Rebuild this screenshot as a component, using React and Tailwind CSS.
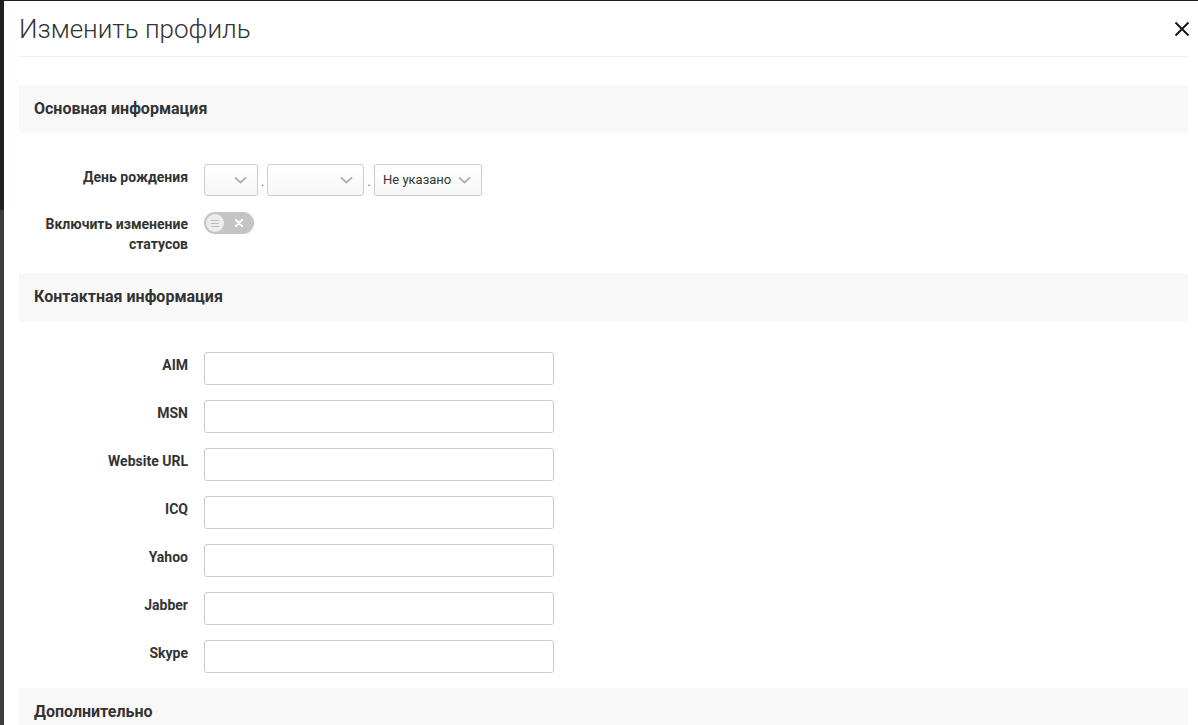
import React from "react";

const Chevron = () => (
  <svg width="13" height="8" viewBox="0 0 13 8" className="shrink-0">
    <path d="M1 1.5 L6.5 6.5 L12 1.5" fill="none" stroke="#b0b0b0" strokeWidth="1.7" />
  </svg>
);

const Select = ({ w, children }) => (
  <div
    className={`h-[32px] ${w} flex items-center justify-between pl-[8px] pr-[10px] border border-[#cccccc] rounded-[3px] bg-gradient-to-b from-white to-[#f7f7f7] text-[13px] text-[#333]`}
  >
    <span>{children}</span>
    <Chevron />
  </div>
);

const Label = ({ children }) => (
  <div className="w-[169px] shrink-0 text-right pt-[3px] pr-0 text-[14px] leading-[20px] font-bold text-[#333]">
    {children}
  </div>
);

const SectionHeader = ({ children }) => (
  <div className="h-[48px] bg-[#f8f8f8] flex items-center pl-[15px] text-[16px] font-bold text-[#333]">
    {children}
  </div>
);

const InputRow = ({ label }) => (
  <div className="flex gap-[16px] mb-[16px]">
    <Label>{label}</Label>
    <div className="w-[350px] h-[33px] border border-[#cccccc] rounded-[3px] bg-white"></div>
  </div>
);

export default function App() {
  return (
    <div
      className="w-[1198px] h-[725px] overflow-hidden flex bg-[#1d2126]"
      style={{ fontFamily: "Roboto, 'Liberation Sans', sans-serif" }}
    >
      <div className="w-[4px] shrink-0 flex flex-col">
        <div className="h-[210px] bg-[#1d2126]"></div>
        <div className="flex-1 bg-[#3d3d3d]"></div>
      </div>
      <div className="flex-1 mt-[1px] bg-white pl-[15px] pr-[10px]">
        <div className="h-[56px] border-b border-[#eeeeee] flex items-center justify-between">
          <div className="text-[26px] font-light text-[#333] tracking-[0px] pt-[1px]">Изменить профиль</div>
          <svg width="16" height="16" viewBox="0 0 16 16" className="mr-[-2px] mb-[0px]">
            <path d="M1.5 1.5 L14.5 14.5 M14.5 1.5 L1.5 14.5" stroke="#111" strokeWidth="1.8" />
          </svg>
        </div>
        <div className="mt-[28px]">
          <SectionHeader>Основная информация</SectionHeader>
          <div className="mt-[31px]">
            <div className="flex gap-[16px] mb-[16px]">
              <Label>День рождения</Label>
              <div className="flex items-center">
                <Select w="w-[54px]"></Select>
                <span className="w-[9px] text-center text-[12px] text-[#555] pt-[4px]">.</span>
                <Select w="w-[97px]"></Select>
                <span className="w-[10px] text-center text-[12px] text-[#555] pt-[4px]">.</span>
                <Select w="w-[108px]">Не указано</Select>
              </div>
            </div>
            <div className="flex gap-[16px] mb-[19px]">
              <div className="w-[169px] shrink-0 text-right pt-[2px] text-[14px] leading-[20px] font-bold text-[#333]">
                Включить изменение
                <br />
                статусов
              </div>
              <div className="w-[50px] h-[22px] rounded-full bg-[#c4c4c4] flex items-center justify-between pl-[2px] pr-[11px]">
                <div className="w-[18px] h-[18px] rounded-full bg-[#ececec] flex flex-col items-center justify-center gap-[2px]">
                  <div className="w-[8px] h-[1px] bg-[#bdbdbd]"></div>
                  <div className="w-[8px] h-[1px] bg-[#bdbdbd]"></div>
                  <div className="w-[8px] h-[1px] bg-[#bdbdbd]"></div>
                </div>
                <svg width="8" height="8" viewBox="0 0 8 8">
                  <path d="M1 1 L7 7 M7 1 L1 7" stroke="#fff" strokeWidth="2" strokeLinecap="round" />
                </svg>
              </div>
            </div>
          </div>
          <SectionHeader>Контактная информация</SectionHeader>
          <div className="mt-[31px]">
            {["AIM", "MSN", "Website URL", "ICQ", "Yahoo", "Jabber", "Skype"].map((l) => (
              <div key={l} className="flex gap-[16px] mb-[15px]">
                <Label>{l}</Label>
                <div className="w-[350px] h-[33px] border border-[#cccccc] rounded-[3px] bg-white"></div>
              </div>
            ))}
          </div>
          <SectionHeader>Дополнительно</SectionHeader>
        </div>
      </div>
    </div>
  );
}
